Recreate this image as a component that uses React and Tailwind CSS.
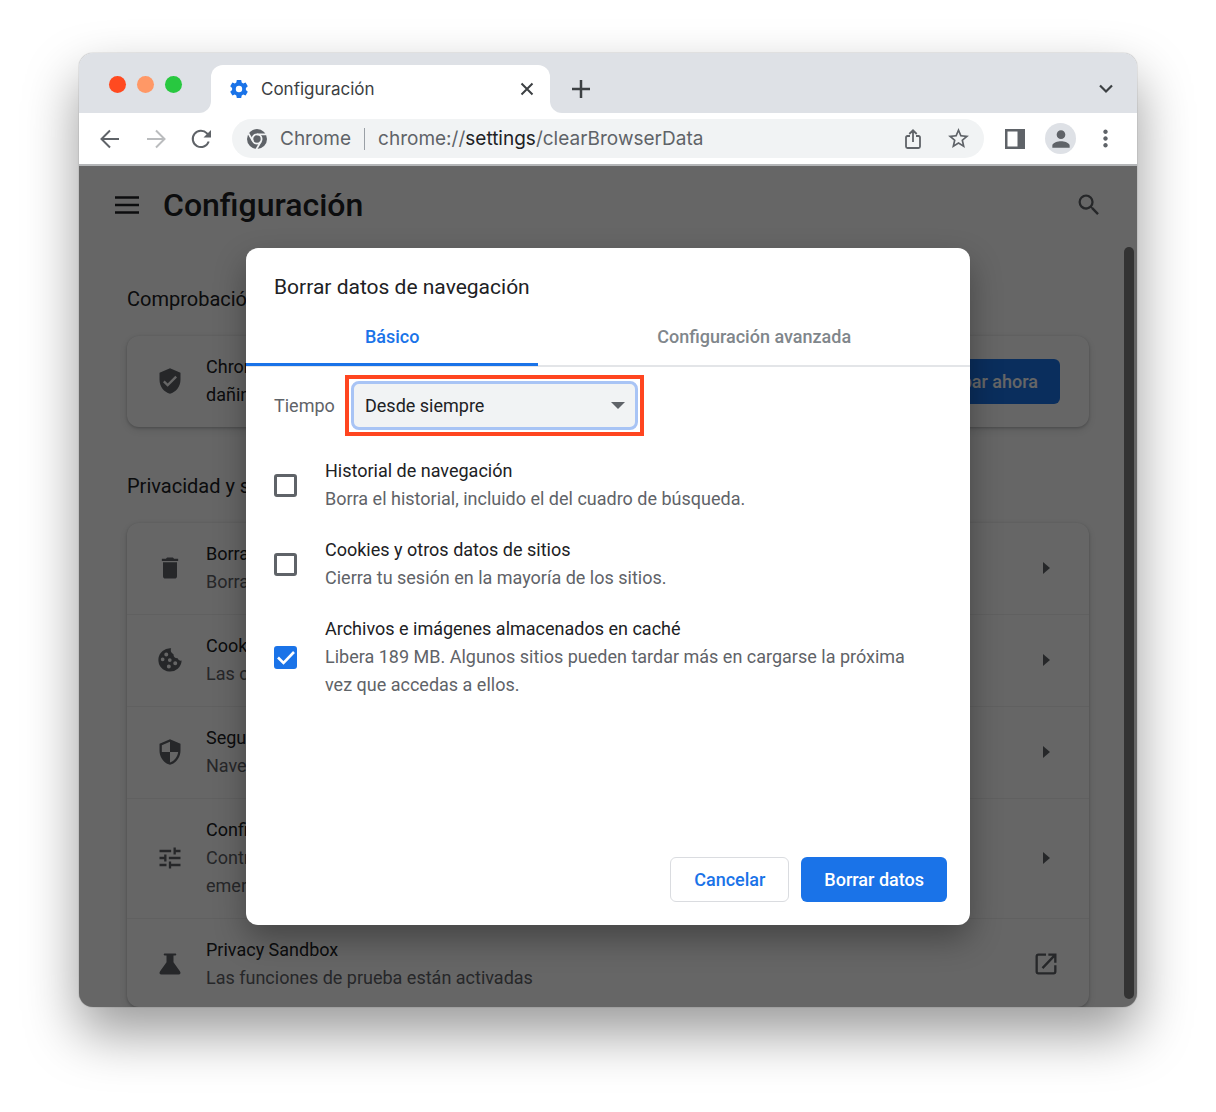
import React, { useState } from 'react';
import { MdDelete, MdVerifiedUser, MdSecurity, MdTune, MdSearch, MdPerson, MdMoreVert, MdStarBorder } from 'react-icons/md';

const GearIcon = () => (
  <svg viewBox="0 0 20 20" className="size-5 shrink-0" fill="#1a73e8">
    <path
      fillRule="evenodd"
      d="M7.8 1h4.4l.5 2.5 1.5.9 2.4-.9 2.2 3.8-1.9 1.7v2l1.9 1.7-2.2 3.8-2.4-.9-1.5.9-.5 2.5H7.8l-.5-2.5-1.5-.9-2.4.9-2.2-3.8L3.1 11V9L1.2 7.3l2.2-3.8 2.4.9 1.5-.9L7.8 1zM10 6.8a3.2 3.2 0 1 0 0 6.4 3.2 3.2 0 0 0 0-6.4z"
    />
  </svg>
);

const ChromeIcon = () => (
  <svg viewBox="0 0 20 20" className="size-5 shrink-0">
    <circle cx="10" cy="10" r="10" fill="#5f6368" />
    <g stroke="#f1f3f4" strokeWidth="1.8" fill="none">
      <circle cx="10" cy="10" r="4.6" />
      <path d="M10 5.4h9.600M6 12.300L1.300 4.200M14 12.300L9.300 20.400" />
    </g>
  </svg>
);

const CookieIcon = () => (
  <svg viewBox="0 0 24 24" className="size-7" fill="currentColor">
    <path
      fillRule="evenodd"
      d="M13 2A10 10 0 1 0 22 12.500 3 3 0 0 1 18.500 10.500 3.500 3.500 0 0 1 15 7 4 4 0 0 1 13 2zM8.800 5.500a1.700 1.700 0 1 1 0 3.400 1.700 1.700 0 0 1 0-3.400zM5.700 9.800a1.600 1.600 0 1 1 0 3.200 1.600 1.600 0 0 1 0-3.200zM11.800 10.500a1.600 1.600 0 1 1 0 3.200 1.600 1.600 0 0 1 0-3.200zM11 15.800a1.700 1.700 0 1 1 0 3.400 1.700 1.700 0 0 1 0-3.400zM16.500 13a1.700 1.700 0 1 1 0 3.400 1.700 1.700 0 0 1 0-3.400z"
    />
  </svg>
);

const ArrowIcon = ({ className }) => (
  <svg viewBox="0 0 20 20" className={className} fill="none" stroke="currentColor" strokeWidth="2">
    <path d="M19 10H2M10 1.500L1.500 10l8.500 8.500" />
  </svg>
);

const ReloadIcon = () => (
  <svg viewBox="0 0 20 20" className="size-5" fill="none" stroke="currentColor" strokeWidth="2">
    <path d="M17.7 12.5A8.2 8.2 0 1 1 16 4.3l1.5 1.8" />
    <path d="M20 1v7.5h-7.5z" fill="currentColor" stroke="none" />
  </svg>
);

const ShareIcon = () => (
  <svg viewBox="0 0 20 22" className="h-[22px] w-5" fill="none" stroke="currentColor" strokeWidth="1.800">
    <path d="M7 8H4.500Q3 8 3 9.500V18.500Q3 20 4.500 20h11Q17 20 17 18.500V9.500Q17 8 15.500 8H13M10 14V2.500M6.300 6L10 2.300 13.700 6" />
  </svg>
);

const SidePanelIcon = () => (
  <svg viewBox="0 0 20 20" className="size-5" fill="#5f6368">
    <path fillRule="evenodd" d="M0 0h20v20H0zM2.500 2.500v15h10v-15z" />
  </svg>
);

const FlaskIcon = () => (
  <svg viewBox="0 0 24 24" className="size-7" fill="currentColor">
    <path d="M20.500 18.300L15 10.500V4.700h1.200a.8.8 0 0 0 .6-1.700H7.200a.8.8 0 0 0 .6 1.700H9v5.800l-5.500 7.800C2.500 19.700 3 21 4.600 21h14.800c1.600 0 2.100-1.300 1.100-2.700z" />
  </svg>
);

const OpenIcon = () => (
  <svg viewBox="0 0 24 24" className="size-7" fill="none" stroke="currentColor" strokeWidth="2">
    <path d="M12 4H5.500Q4 4 4 5.500v13Q4 20 5.500 20h13Q20 20 20 18.500V13M14 4h6v7M20 4L9 15.500" />
  </svg>
);

const CaretIcon = () => (
  <svg viewBox="0 0 7 12" className="h-3 w-[7px]" fill="currentColor">
    <path d="M0 0l7 6-7 6z" />
  </svg>
);

const TabStrip = () => (
  <div className="flex h-[60px] items-end bg-[#dee1e6] pr-5">
    <div className="flex gap-[11px] self-center pt-0.5 pl-[30px]">
      <span className="size-[17px] rounded-full bg-[#ff4a20]" />
      <span className="size-[17px] rounded-full bg-[#ff9866]" />
      <span className="size-[17px] rounded-full bg-[#28c840]" />
    </div>
    <div className="ml-[17px] size-3 bg-white">
      <div className="size-full rounded-br-xl bg-[#dee1e6]" />
    </div>
    <div className="flex h-12 w-[339px] items-center rounded-t-xl bg-white pl-[18px] pr-4">
      <GearIcon />
      <span className="ml-3 grow pt-px text-[17px] text-[#3c4043]">Configuración</span>
      <button aria-label="Cerrar pestaña">
        <svg viewBox="0 0 14 14" className="size-[14px]" stroke="#3c4043" strokeWidth="2">
          <path d="M1.500 1.500l11 11M12.500 1.500l-11 11" />
        </svg>
      </button>
    </div>
    <div className="size-3 bg-white">
      <div className="size-full rounded-bl-xl bg-[#dee1e6]" />
    </div>
    <button aria-label="Nueva pestaña" className="ml-[10px] flex h-12 items-center">
      <svg viewBox="0 0 18 18" className="size-[18px]" stroke="#3c4043" strokeWidth="2.500">
        <path d="M9 0v18M0 9h18" />
      </svg>
    </button>
    <button aria-label="Buscar pestañas" className="ml-auto flex h-12 items-center pr-1">
      <svg viewBox="0 0 14 10" className="h-[10px] w-[14px]" fill="none" stroke="#3c4043" strokeWidth="2.200">
        <path d="M1 1.500l6 6 6-6" />
      </svg>
    </button>
  </div>
);

const Toolbar = () => (
  <div className="flex h-[53px] items-center border-b-2 border-[#b4b6b8] bg-white pl-[21px] pr-[18px] text-[#5f6368]">
    <button aria-label="Atrás"><ArrowIcon className="size-5" /></button>
    <button aria-label="Adelante" className="ml-[26px] text-[#babcbe]"><ArrowIcon className="size-5 rotate-180" /></button>
    <button aria-label="Recargar" className="ml-[25px]"><ReloadIcon /></button>
    <div className="ml-[21px] flex h-[39px] grow items-center rounded-full bg-[#f1f3f4] pl-[15px] pr-[13px] text-[19px]">
      <ChromeIcon />
      <span className="ml-[13px] pt-px">Chrome</span>
      <span className="mx-[13px] h-[22px] w-px bg-[#9aa0a6]" />
      <span className="pt-px">chrome://<span className="text-[#202124]">settings</span>/clearBrowserData</span>
      <button aria-label="Compartir" className="ml-auto"><ShareIcon /></button>
      <button aria-label="Añadir a marcadores" className="ml-[23px]"><MdStarBorder size={25} /></button>
    </div>
    <button aria-label="Panel lateral" className="ml-[21px]"><SidePanelIcon /></button>
    <button aria-label="Perfil" className="ml-5 flex size-[31px] items-center justify-center rounded-full bg-[#dee1e6]">
      <MdPerson size={26} />
    </button>
    <button aria-label="Más" className="ml-4"><MdMoreVert size={27} /></button>
  </div>
);

const rows = [
  {
    icon: <MdDelete size={28} />,
    title: 'Borrar datos de navegación',
    text: ['Borra el historial, las cookies, la caché y más'],
  },
  {
    icon: <CookieIcon />,
    title: 'Cookies y otros datos de sitios',
    text: ['Las cookies de terceros están bloqueadas en el modo Incógnito'],
  },
  {
    icon: <MdSecurity size={28} />,
    title: 'Seguridad',
    text: ['Navegación segura y otros ajustes de seguridad'],
  },
  {
    icon: <MdTune size={28} />,
    title: 'Configuración de sitios',
    text: ['Controla qué información pueden usar y mostrar los sitios (ubicación, cámara,', 'emergentes y más)'],
  },
  {
    icon: <FlaskIcon />,
    title: 'Privacy Sandbox',
    text: ['Las funciones de prueba están activadas'],
    external: true,
  },
];

const SettingsPage = () => (
  <main className="text-[#202124]">
    <header className="flex h-[78px] items-center pl-9 pr-[34px]">
      <button aria-label="Menú principal">
        <svg viewBox="0 0 24 18" className="h-[18px] w-6" stroke="#202124" strokeWidth="2.600">
          <path d="M0 1.500h24M0 9h24M0 16.500h24" />
        </svg>
      </button>
      <h1 className="ml-6 text-[32px] font-medium">Configuración</h1>
      <button aria-label="Buscar" className="ml-auto text-[#5f6368]"><MdSearch size={28} /></button>
    </header>
    <div className="px-12">
      <h2 className="pt-[41px] pb-[23px] text-[20px] leading-7">Comprobación de seguridad</h2>
      <section className="flex items-center rounded-xl bg-white pt-[17px] pb-[18px] pl-[29px] pr-[29px] shadow-[0_1px_3px_rgba(60,64,67,0.3),0_3px_9px_rgba(60,64,67,0.15)]">
        <MdVerifiedUser size={28} className="shrink-0 text-[#5f6368]" />
        <p className="ml-[22px] text-[18px] leading-7">
          Chrome puede ayudarte a protegerte frente a extensiones<br />
          dañinas, brechas de datos y mucho más
        </p>
        <button className="ml-auto h-[45px] rounded-md bg-[#1a73e8] px-[22px] text-[18px] font-medium text-white">
          Comprobar ahora
        </button>
      </section>
      <h2 className="pt-[45px] pb-[23px] text-[20px] leading-7">Privacidad y seguridad</h2>
      <section className="rounded-xl bg-white shadow-[0_1px_3px_rgba(60,64,67,0.3),0_3px_9px_rgba(60,64,67,0.15)]">
        {rows.map((row) => (
          <a
            key={row.title}
            href="#"
            className="flex items-center border-t border-black/6 pt-[17px] pb-[18px] pl-[29px] pr-[29px] text-[18px] leading-7 text-[#5f6368] first:border-t-0 last:pb-[15px]"
          >
            <span className="shrink-0">{row.icon}</span>
            <span className="ml-[22px] grow">
              <span className="block text-[#202124]">{row.title}</span>
              {row.text.map((line) => (
                <span key={line} className="block">{line}</span>
              ))}
            </span>
            <span className="flex w-7 justify-center">{row.external ? <OpenIcon /> : <CaretIcon />}</span>
          </a>
        ))}
      </section>
    </div>
  </main>
);

const options = [
  {
    id: 'history',
    title: 'Historial de navegación',
    text: 'Borra el historial, incluido el del cuadro de búsqueda.',
  },
  {
    id: 'cookies',
    title: 'Cookies y otros datos de sitios',
    text: 'Cierra tu sesión en la mayoría de los sitios.',
  },
  {
    id: 'cache',
    title: 'Archivos e imágenes almacenados en caché',
    text: 'Libera 189 MB. Algunos sitios pueden tardar más en cargarse la próxima vez que accedas a ellos.',
  },
];

const ClearDataDialog = () => {
  const [checked, setChecked] = useState({ history: false, cookies: false, cache: true });

  return (
    <div
      role="dialog"
      aria-labelledby="dialog-title"
      className="w-[724px] rounded-xl bg-white text-[18px] leading-7 text-[#5f6368] shadow-[0_14px_32px_rgba(0,0,0,0.32)]"
    >
      <h2 id="dialog-title" className="px-7 pt-[25px] text-[21px] text-[#202124]">Borrar datos de navegación</h2>
      <div role="tablist" className="flex border-b-2 border-[#e3e5e8] pt-[10px] font-medium">
        <button role="tab" aria-selected="true" className="-mb-px h-[55px] flex-auto border-b-3 border-[#1a73e8] text-[#1a73e8]">
          Básico
        </button>
        <button role="tab" aria-selected="false" className="-mb-px h-[55px] flex-auto border-b-3 border-transparent text-[#80868b]">
          Configuración avanzada
        </button>
      </div>
      <div className="flex items-center pt-2 pl-7">
        <label htmlFor="time" className="w-[71px]">Tiempo</label>
        <div className="relative w-[299px] border-4 border-[#ff4520] p-0.5">
          <select
            id="time"
            className="h-[49px] w-full appearance-none rounded-lg border-3 border-[#a8c4f5] bg-[#f1f3f4] px-[11px] text-[#202124] outline-none"
          >
            <option>Desde siempre</option>
            <option>Última hora</option>
          </select>
          <svg viewBox="0 0 14 7" className="pointer-events-none absolute top-[23px] right-[15px] h-[7px] w-[14px]" fill="#5f6368">
            <path d="M0 0h14L7 7z" />
          </svg>
        </div>
      </div>
      <div className="flex flex-col gap-[23px] pt-[21px] pr-10 pl-7">
        {options.map((option) => (
          <div key={option.id} className="flex items-center">
            <span className="relative mr-7 size-[23px] shrink-0">
              <input
                type="checkbox"
                id={option.id}
                checked={checked[option.id]}
                onChange={(e) => setChecked({ ...checked, [option.id]: e.target.checked })}
                className="peer block size-[23px] appearance-none rounded-[3px] border-3 border-[#5f6368] checked:border-[#1a73e8] checked:bg-[#1a73e8]"
              />
              <svg
                viewBox="0 0 23 23"
                className="pointer-events-none absolute inset-0 hidden peer-checked:block"
                fill="none"
                stroke="white"
                strokeWidth="2.600"
              >
                <path d="M4 11.500l5.500 5.500L20 6" />
              </svg>
            </span>
            <label htmlFor={option.id}>
              <span className="block text-[#202124]">{option.title}</span>
              <span className="block">{option.text}</span>
            </label>
          </div>
        ))}
      </div>
      <div className="flex justify-end gap-3 px-[23px] pt-[158px] pb-[23px] font-medium">
        <button className="h-[45px] rounded-md border border-[#dadce0] px-[23px] text-[#1a73e8]">Cancelar</button>
        <button className="h-[45px] rounded-md bg-[#1a73e8] px-[23px] text-white">Borrar datos</button>
      </div>
    </div>
  );
};

const App = () => {
  return (
    <div className="bg-white px-[79px] pt-[53px] pb-[105px] font-['Roboto',sans-serif]">
      <div className="overflow-hidden rounded-[14px] shadow-[0_0_1px_rgba(0,0,0,0.6),0_26px_54px_rgba(0,0,0,0.4)]">
        <div className="font-['Inter',sans-serif]">
          <TabStrip />
          <Toolbar />
        </div>
        <div className="relative">
          <SettingsPage />
          {/* dimmed backdrop with the modal and scrollbar on top */}
          <div className="absolute inset-0 flex items-center justify-center bg-black/60">
            <ClearDataDialog />
            <div className="absolute top-[81px] right-[3px] bottom-2 w-[10px] rounded-full bg-[#333333]" />
          </div>
        </div>
      </div>
    </div>
  );
};

export default App;
